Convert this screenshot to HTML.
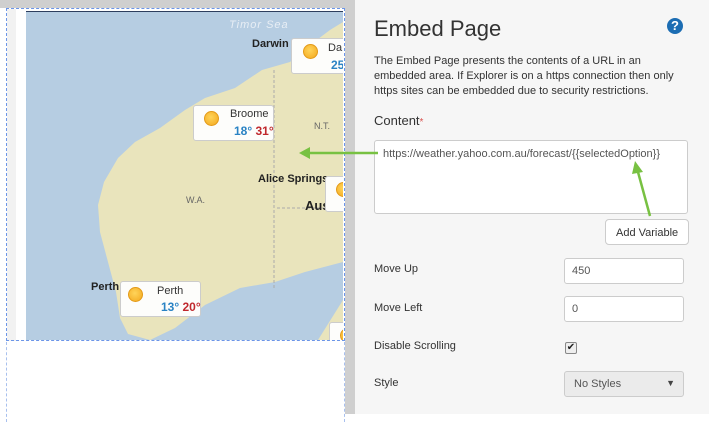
<!DOCTYPE html>
<html><head><style>
body{margin:0;width:709px;height:414px;overflow:hidden;font-family:"Liberation Sans",sans-serif;background:#fff;position:relative}
.a{position:absolute;white-space:nowrap}
.box{position:absolute;background:#fdfdfb;border:1px solid #ccc;border-radius:3px;font-size:11px;color:#333}
.sun{position:absolute;width:13px;height:13px;border-radius:50%;background:radial-gradient(circle at 45% 40%,#ffd45a,#f3a81d);border:1px solid #e39a18}
.lbl{position:absolute;font-size:11px;color:#333}
.inp{position:absolute;background:#fff;border:1px solid #ccc;border-radius:3px;font-size:11px;color:#555;box-sizing:border-box;padding:6px 0 0 7px;white-space:nowrap}
.clip{position:absolute;left:0;top:0;width:709px;height:414px;clip-path:inset(11px 366px 74px 26px)}
</style></head><body>
<div class="a" style="left:0;top:0;width:709px;height:8px;background:#cfcfcf"></div>
<div class="a" style="left:345px;top:0;width:10px;height:414px;background:#cfcfcf"></div>
<div class="a" style="left:355px;top:0;width:354px;height:414px;background:#f6f6f6"></div>
<div class="a" style="left:7px;top:9px;width:9px;height:332px;background:#f2f2f2"></div>
<div class="clip">
<svg class="a" style="left:26px;top:11px" width="317" height="329" viewBox="26 11 317 329">
<rect x="26" y="11" width="317" height="329" fill="#b6cde2"/>
<path d="M343 22 L330 30 L310 45 L290 62 L262 70 L235 88 L205 98 L185 110 L160 128 L135 142 L118 158 L104 182 L98 205 L100 232 L108 262 L116 292 L120 318 L128 334 L150 340 L175 328 L205 305 L240 288 L275 282 L305 272 L343 262 Z" fill="#e9e4bc"/>
<path d="M343 300 L343 340 L318 340 Z" fill="#e9e4bc"/>
<line x1="274" y1="70" x2="274" y2="290" stroke="#aaa" stroke-dasharray="3,2" stroke-width="1"/>
<line x1="277" y1="208" x2="343" y2="208" stroke="#aaa" stroke-dasharray="3,2"/>
<rect x="26" y="10" width="317" height="2" fill="#2d3e5e"/>
</svg>
<div class="a" style="left:229px;top:19px;font-size:11px;color:#e8eef5;font-style:italic;letter-spacing:1px">Timor Sea</div>
<div class="a" style="left:252px;top:38px;font-size:11px;font-weight:bold;color:#222">Darwin</div>
<div class="a" style="left:314px;top:121px;font-size:9px;color:#666">N.T.</div>
<div class="a" style="left:186px;top:195px;font-size:9px;color:#666">W.A.</div>
<div class="a" style="left:258px;top:173px;font-size:11px;font-weight:bold;color:#222">Alice Springs</div>
<div class="a" style="left:305px;top:198px;font-size:13px;font-weight:bold;color:#222">Aus</div>
<div class="a" style="left:91px;top:281px;font-size:11px;font-weight:bold;color:#222">Perth</div>
<div class="box" style="left:291px;top:38px;width:60px;height:34px"><div class="sun" style="left:11px;top:5px"></div><div class="a" style="left:36px;top:3px">Da</div><div class="a" style="left:39px;top:19px;color:#2a83c4;font-weight:bold;font-size:12px">25</div></div>
<div class="box" style="left:193px;top:105px;width:79px;height:34px"><div class="sun" style="left:10px;top:5px"></div><div class="a" style="left:36px;top:2px">Broome</div><div class="a" style="left:40px;top:18px;font-size:12px;font-weight:bold"><span style="color:#2a83c4">18°</span> <span style="color:#c0282d">31°</span></div></div>
<div class="box" style="left:325px;top:176px;width:30px;height:34px"><div class="sun" style="left:10px;top:5px"></div></div>
<div class="box" style="left:120px;top:281px;width:79px;height:34px"><div class="sun" style="left:7px;top:5px"></div><div class="a" style="left:36px;top:3px">Perth</div><div class="a" style="left:40px;top:18px;font-size:12px;font-weight:bold"><span style="color:#2a83c4">13°</span> <span style="color:#c0282d">20°</span></div></div>
<div class="box" style="left:329px;top:322px;width:30px;height:30px"><div class="sun" style="left:10px;top:5px"></div></div>
</div>
<div class="a" style="left:6px;top:8px;width:337px;height:331px;border:1.5px dashed #6b95e8"></div>
<div class="a" style="left:6px;top:342px;width:337px;height:80px;border-left:1px dashed #a8c0ee;border-right:1px dashed #a8c0ee"></div>
<div class="a" style="left:374px;top:16px;font-size:22px;color:#333">Embed Page</div>
<div class="a" style="left:667px;top:18px;width:16px;height:16px;border-radius:50%;background:#1c6db3;color:#fff;font-size:13px;font-weight:bold;text-align:center;line-height:16px">?</div>
<div class="a" style="left:374px;top:54px;width:320px;font-size:11px;line-height:15px;color:#333;white-space:normal">The Embed Page presents the contents of a URL in an embedded area. If Explorer is on a https connection then only https sites can be embedded due to security restrictions.</div>
<div class="a" style="left:374px;top:113px;font-size:13px;color:#333">Content<span style="color:#d9534f;font-size:10px">*</span></div>
<div class="inp" style="left:374px;top:140px;width:314px;height:74px;font-size:11px;padding:7px 8px">https://weather.yahoo.com.au/forecast/{{selectedOption}}</div>
<div class="inp" style="left:605px;top:219px;width:84px;height:26px;font-size:11px;color:#333;padding:7px 0 0 10px;border-radius:4px">Add Variable</div>
<div class="lbl" style="left:374px;top:263px">Move Up</div>
<div class="inp" style="left:564px;top:258px;width:120px;height:26px">450</div>
<div class="lbl" style="left:374px;top:302px">Move Left</div>
<div class="inp" style="left:564px;top:296px;width:120px;height:26px">0</div>
<div class="lbl" style="left:374px;top:340px">Disable Scrolling</div>
<div class="a" style="left:565px;top:342px;width:10px;height:10px;border:1px solid #888;border-radius:2px;background:#eee;font-size:10px;line-height:10px;text-align:center;color:#222">✔</div>
<div class="lbl" style="left:374px;top:377px">Style</div>
<div class="inp" style="left:564px;top:371px;width:120px;height:26px;background:#ebebeb;padding-left:9px">No Styles<span style="position:absolute;right:8px;top:6px;font-size:9px;color:#444">▼</span></div>
<svg class="a" style="left:0;top:0" width="709" height="414">
<g stroke="#78c142" stroke-width="2.5" fill="#78c142">
<line x1="378" y1="153" x2="308" y2="153"/>
<polygon points="299,153 310,147 310,159" stroke="none"/>
<line x1="650" y1="216" x2="638" y2="172"/>
<polygon points="635,161 643,172 632,174" stroke="none"/>
</g></svg>
</body></html>
